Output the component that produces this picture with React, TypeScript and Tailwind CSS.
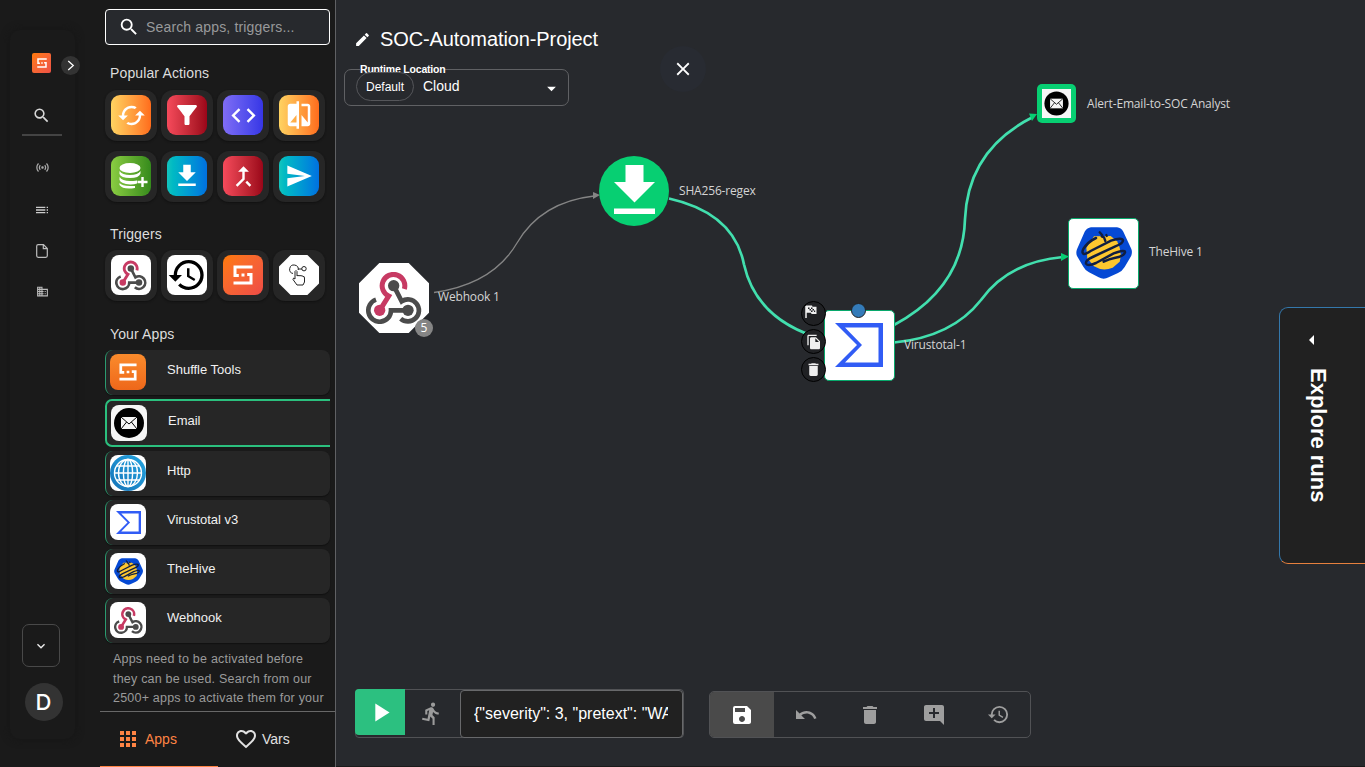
import React from "react";
import {
  MdSearch, MdCached, MdFilterAlt, MdCode, MdCompare, MdGetApp, MdCallMerge, MdSend, MdHistory,
  MdSave, MdUndo, MdDelete, MdAddComment, MdDirectionsRun, MdPlayArrow, MdEdit, MdClose,
  MdArrowDropDown, MdArrowLeft, MdApps, MdFavoriteBorder, MdFileCopy,
  MdToc, MdSensors, MdKeyboardArrowDown, MdBusiness,
} from "react-icons/md";

function WebhookLogo({ className }: { className: string }) {
  return (
    <svg viewBox="78 426 168 156" className={className} fill="none" strokeWidth="14">
      <path d="M193 477A34 34 0 1 0 146 498L121 538" stroke="#c73a63" strokeWidth="15" />
      <circle cx="119" cy="541" r="17" fill="#c73a63" />
      <path d="M161 467L185 514A33 33 0 1 1 182 566" stroke="#4b4b4b" />
      <path d="M108 509A34 34 0 1 0 153 541H204" stroke="#4b4b4b" />
      <circle cx="161" cy="467" r="17" fill="#4b4b4b" />
      <circle cx="204" cy="541" r="17" fill="#4b4b4b" />
    </svg>
  );
}

function ShuffleMark({ className }: { className: string }) {
  return (
    <svg viewBox="0 0 20 20" className={className} fill="none" stroke="#fff" strokeWidth="3">
      <path d="M19.500 2H2V10.500H5.800M.5 18H18V9.500H14.200" />
      <path d="M8.500 10H11.500" />
    </svg>
  );
}

function MailLogo({ className }: { className: string }) {
  return (
    <svg viewBox="0 0 36 36" className={className}>
      <circle cx="18" cy="18" r="15" fill="#000" />
      <path d="M10 12H26V24H10Z" fill="#f5f5f5" />
      <path d="M10 12L18 19L26 12M10 24L15.600 17M26 24L20.400 17" fill="none" stroke="#000" strokeWidth="1" />
    </svg>
  );
}

function HttpLogo() {
  return (
    <svg viewBox="0 0 36 36" className="size-9">
      <defs>
        <linearGradient id="globe" x1="0" y1="1" x2="1" y2="0">
          <stop stopColor="#1673b8" /><stop offset="1" stopColor="#23a5e0" />
        </linearGradient>
      </defs>
      <circle cx="18" cy="18" r="18" fill="url(#globe)" />
      <g fill="none" stroke="#fff" strokeWidth="1.4">
        <circle cx="18" cy="18" r="13.5" />
        <ellipse cx="18" cy="18" rx="9.5" ry="13.5" />
        <ellipse cx="18" cy="18" rx="4.6" ry="13.5" />
        <path d="M18 4.500V31.500M4.500 18H31.500M6.500 11H29.500M6.500 25H29.500" />
      </g>
    </svg>
  );
}

function SigmaLogo({ className }: { className: string }) {
  return (
    <svg viewBox="0 0 48 44" className={className}>
      <path d="M0 0H48V44H0L22 22ZM10 4.500L27 22L10 39.500H43.500V4.500Z" fill="#315cf5" fillRule="evenodd" />
    </svg>
  );
}

function HiveLogo({ className }: { className: string }) {
  return (
    <svg viewBox="0 0 168 156" className={className}>
      <path d="M45 1H123Q135 2 142 14L166 66Q170 76 165 88L146 120Q139 132 126 138L98 151Q83 159 68 151L39 136Q28 130 22 119L3 87Q-1 77 3 67L26 14Q34 2 45 1Z" fill="#0549d4" />
      <path d="M54 28L104 27L123 43Q140 75 131 104L110 122Q80 134 54 118L34 94L31 62Z" fill="#fdc72f" />
      <path d="M60 33Q36 44 22 66Q16 78 24 81Q30 81 44 72L105 41Q139 30 141 40Q141 50 118 58L50 90Q28 100 30 110Q36 119 60 108L113 79Q148 66 147 76Q143 88 118 92Q99 96 83 104" fill="none" stroke="#101e41" strokeWidth="7.500" strokeLinecap="round" />
      <path d="M71 16L79 25M77 28L84 31L88 42M91 24L92 27" stroke="#101e41" strokeWidth="7" strokeLinecap="round" fill="none" />
    </svg>
  );
}

function DatabasePlus() {
  return (
    <svg viewBox="0 0 30 26" className="ml-1.5 h-[26px] w-[30px]" fill="#fff">
      <ellipse cx="11" cy="5" rx="10.5" ry="5" />
      <path d="M.5 8Q3 12 11 12T21.500 8V10.500Q20 15 11 15T.5 11ZM.5 14Q3 18 11 18T18 17V20.500Q15 21.500 11 21.400Q2 21 .5 17ZM.5 20Q3 23 11 23H16V25Q4 27 .5 22Z" />
      <path d="M23.500 14V24M18.500 19H28.500" stroke="#fff" strokeWidth="2.4" />
    </svg>
  );
}

function HandTap() {
  return (
    <svg viewBox="0 0 20 22" className="h-[22px] w-5" fill="none" stroke="#222" strokeWidth="1">
      <path d="M4 9.500A4.300 4.300 0 1 1 9.200 6M9 5H13" />
      <circle cx="15" cy="4.700" r="2.200" />
      <path d="M6 15V7.500Q7 5.500 8 7.500V12Q9 10.500 10 12Q11 10.700 12 12Q13 11 14 12.500Q15.500 12 15.500 14V18L14 21H8L4 15.500Q4 13 6 15" />
    </svg>
  );
}

function FlagIcon() {
  return (
    <svg viewBox="0 0 12 13" className="mr-1.5 mb-1 h-[13px] w-3">
      <path d="M1 13V1" stroke="#f0f0f0" strokeWidth="1.500" />
      <path d="M1 .5H7L7.500 1.800H11.500V9H6.500L6 7.700H1Z" fill="#f0f0f0" />
      <path d="M3 2.500H4.500V4H3ZM6 2.500H7.500V4H6ZM4.500 4H6V5.500H4.500ZM7.500 4H9V5.500H7.500ZM6 5.500H7.500V7H6ZM9 5.500H10.200V7H9Z" fill="#202124" />
    </svg>
  );
}

function DocumentIcon() {
  return (
    <svg viewBox="0 0 12 14" className="mt-[26px] h-3.5 w-3" fill="none" stroke="#bdbdbd" strokeWidth="1.200">
      <path d="M7.500 .7H2.200Q.7 .7 .7 2.200V11.800Q.7 13.300 2.200 13.300H9.800Q11.300 13.300 11.300 11.800V4.500ZM7.300 .8V4.700H11.200" />
    </svg>
  );
}

const tile = "flex h-[51px] w-[52px] items-center justify-center rounded-[12px] bg-[#262626] shadow-[0_1px_2px_#111]";

function Tile({ tone, children }: { tone: string; children: React.ReactNode }) {
  return (
    <div className={tile}>
      <div className={`mb-px flex size-10 items-center justify-center text-white ${tone}`}>{children}</div>
    </div>
  );
}

const yellow = "rounded-[9px] bg-linear-to-r from-[#ffd361] to-[#ff6c1b]";
const red = "rounded-[9px] bg-linear-to-r from-[#f64a5b] to-[#9b0519]";
const blue = "rounded-[9px] bg-linear-to-r from-[#13c5bd] to-[#0070e0]";
const heading = "ml-[5px] h-5 shrink-0 text-[14px] leading-5 tracking-[0.13px] text-[#ddd]";

function AppRow({ name, tone, active, children }: { name: string; tone: string; active?: boolean; children: React.ReactNode }) {
  return (
    <div className={active
      ? "flex h-[48px] w-[225px] shrink-0 items-center rounded-l-[7px] border-2 border-r-0 border-[#2bc07e] bg-[#262626] pl-1"
      : "flex h-[45px] w-[225px] shrink-0 items-center rounded-[8px] border-l border-[#2b9b70] bg-[#262626] pl-1 shadow-[0_1px_1px_#111]"}>
      <div className={`mb-px flex size-9 shrink-0 items-center justify-center overflow-hidden rounded-[8px] ${tone}`}>{children}</div>
      <span className="mb-[5px] ml-[21px] text-[13px] text-[#f1f1f1]">{name}</span>
    </div>
  );
}

function Rail() {
  return (
    <nav className="flex w-[100px] shrink-0 pt-[30px] pl-[10px]">
      <div className="flex h-[709px] w-[65px] flex-col items-center rounded-[10px] shadow-[0_0_8px_#151515]">
        <div className="flex h-[68px] w-full items-start pt-[23px] pl-[22px]">
          <div className="flex h-5 w-[19px] shrink-0 items-center justify-center rounded-[2px] bg-linear-to-br from-[#ff7a00] to-[#ee5145]">
            <ShuffleMark className="size-[10px]" />
          </div>
          <div className="mt-[3px] ml-[10px] flex size-[19px] shrink-0 items-center justify-center rounded-full bg-[#333] text-white">
            <svg viewBox="0 0 8 12" className="ml-px h-[11px] w-2" fill="none" stroke="#fff" strokeWidth="1.400"><path d="M1 1L6.500 6L1 11" /></svg>
          </div>
        </div>
        <MdSearch size={19} className="mt-2 mr-0.5 text-[#d8d8d8]" />
        <div className="mt-[9px] mr-[2px] h-0.5 w-10 bg-[#444]" />
        <div className="mr-[1px] flex flex-col items-center">
          <MdSensors size={15} className="mt-6 text-[#aaa]" />
          <MdToc size={16} className="mt-[27px] text-[#ccc]" />
          <DocumentIcon />
          <MdBusiness size={13} className="mt-[27px] text-[#bbb]" />
        </div>
        <div className="mt-[326px] mr-[3px] flex h-[43px] w-[38px] shrink-0 items-center justify-center rounded-[7px] border border-[#494949] text-[#eee]">
          <MdKeyboardArrowDown size={16} />
        </div>
        <div className="mt-4 ml-[2px] flex size-[38px] shrink-0 items-center justify-center rounded-full bg-[#333] font-['Inter',sans-serif] text-[22px] font-medium text-white">D</div>
      </div>
    </nav>
  );
}

function AppsPanel() {
  return (
    <aside className="flex h-full w-[236px] shrink-0 flex-col border-r border-[#606164]">
      <div className="flex h-[711px] shrink-0 flex-col overflow-hidden pl-[5px]">
        <div className="mt-[9px] flex h-9 w-[225px] shrink-0 items-center rounded-[4px] border border-white bg-[#27292d] pl-3 text-white">
          <MdSearch size={22} />
          <span className="ml-[6px] text-[14px] tracking-[0.16px] text-[#98999b]">Search apps, triggers...</span>
        </div>
        <h2 className={`mt-[18px] ${heading}`}>Popular Actions</h2>
        <div className="mt-[7px] grid shrink-0 grid-cols-[repeat(4,52px)] gap-x-1 gap-y-[10px]">
          <Tile tone={yellow}><MdCached size={29} /></Tile>
          <Tile tone={red}><MdFilterAlt size={30} /></Tile>
          <Tile tone="rounded-[9px] bg-linear-to-r from-[#806cf5] to-[#3735e6]"><MdCode size={29} /></Tile>
          <Tile tone={yellow}><MdCompare size={30} /></Tile>
          <Tile tone="rounded-[9px] bg-linear-to-r from-[#8acd42] to-[#358b1c]"><DatabasePlus /></Tile>
          <Tile tone={blue}><MdGetApp size={30} /></Tile>
          <Tile tone={red}><MdCallMerge size={29} /></Tile>
          <Tile tone={blue}><MdSend size={28} /></Tile>
        </div>
        <h2 className={`mt-[22px] ${heading}`}>Triggers</h2>
        <div className="mt-[6px] flex shrink-0 gap-1">
          <Tile tone="rounded-[8px] bg-white"><WebhookLogo className="h-[31px] w-8" /></Tile>
          <Tile tone="rounded-[8px] bg-white"><MdHistory size={40} className="text-black" /></Tile>
          <Tile tone="rounded-[8px] bg-linear-to-br from-[#ff7a00] to-[#ee4b45]"><ShuffleMark className="size-5" /></Tile>
          <Tile tone="bg-white [clip-path:polygon(29%_0,71%_0,100%_29%,100%_71%,71%_100%,29%_100%,0_71%,0_29%)]"><HandTap /></Tile>
        </div>
        <h2 className={`mt-[23px] ${heading}`}>Your Apps</h2>
        <div className="mt-1.5 flex shrink-0 flex-col gap-1">
          <AppRow name="Shuffle Tools" tone="bg-linear-to-b from-[#fa8b2c] to-[#ee671a]"><ShuffleMark className="size-[18px]" /></AppRow>
          <AppRow name="Email" tone="bg-[#f6f6f6]" active><MailLogo className="size-9" /></AppRow>
          <AppRow name="Http" tone="bg-white"><HttpLogo /></AppRow>
          <AppRow name="Virustotal v3" tone="bg-white"><SigmaLogo className="h-[23px] w-[25px]" /></AppRow>
          <AppRow name="TheHive" tone="bg-white"><HiveLogo className="h-[27px] w-[29px]" /></AppRow>
          <AppRow name="Webhook" tone="bg-white"><WebhookLogo className="h-[27px] w-[29px]" /></AppRow>
        </div>
        <p className="mt-[7px] ml-2 w-[222px] text-[12.5px] leading-[19.5px] tracking-[0.21px] whitespace-nowrap text-[#9a9a9a]">
          Apps need to be activated before<br />they can be used. Search from our<br />2500+ apps to activate them for your
        </p>
      </div>
      <div className="flex h-14 items-start border-t border-[#686868] text-[14px]">
        <div className="flex h-[55px] w-[118px] items-center border-b border-[#ff8444] pl-4 text-[#ff8444]">
          <MdApps size={24} /><span className="ml-[5px]">Apps</span>
        </div>
        <div className="flex h-[54px] flex-1 items-center pl-4 text-[#e1e1e1]">
          <MdFavoriteBorder size={24} /><span className="ml-[4px]">Vars</span>
        </div>
      </div>
    </aside>
  );
}

function Edges() {
  return (
    <svg viewBox="336 0 1029 767" className="absolute inset-0 h-[767px] w-full" fill="none">
      <path d="M434 292.500Q493 284 517 243Q541 202 594 196" stroke="#858585" strokeWidth="1.300" />
      <path d="M593 192L600 195L593 199Z" fill="#858585" />
      <g stroke="#42dfae" strokeWidth="2.700">
        <path d="M669 198.500Q734 213 744 264.500Q757 322 826 340" />
        <path d="M894 325Q963 288 965 219Q968 150 1032 117.500" />
        <path d="M894 342.500Q952 337 981 300Q1008 262 1063 257" />
      </g>
      <path d="M1029 113.500L1037 114L1032 121Z" fill="#07cf72" />
      <path d="M1061 253L1069 256.500L1061 261Z" fill="#07cf72" />
    </svg>
  );
}

const label = "absolute font-['Open_Sans','Noto_Sans',sans-serif] text-[12px] leading-4 tracking-[-0.17px] whitespace-nowrap text-[#d4d4d4]";
const nodeAction = "flex size-[25px] items-center justify-center rounded-full border border-black bg-[#202124] text-[#f0f0f0]";

function Nodes() {
  return (
    <>
      <div className="absolute top-[263px] left-[23px] flex size-[70px] items-center justify-center bg-white [clip-path:polygon(29%_0,71%_0,100%_29%,100%_71%,71%_100%,29%_100%,0_71%,0_29%)]">
        <WebhookLogo className="h-[52px] w-14" />
      </div>
      <div className="absolute top-[319px] left-[79px] flex size-[18px] items-center justify-center rounded-full bg-[#858585] font-['Open_Sans',sans-serif] text-[12px] text-white">5</div>
      <span className={`${label} top-[289px] left-[102px]`}>Webhook 1</span>

      <div className="absolute top-[156px] left-[263px] flex size-[70px] items-center justify-center rounded-full bg-[#07cf72]">
        <svg viewBox="0 0 41 49" className="mb-1 h-[49px] w-[41px]" fill="#fff"><path d="M11.500 0H29.500V17H41L20.500 37.500L0 17H11.500ZM0 43.500H41V49H0Z" /></svg>
      </div>
      <span className={`${label} top-[183px] left-[343px]`}>SHA256-regex</span>

      <div className="absolute top-[310px] left-[488px] flex size-[71px] items-center justify-center rounded-[5px] border border-[#07a86b] bg-white">
        <SigmaLogo className="mr-px mb-px h-11 w-12" />
      </div>
      <div className="absolute top-[303px] left-[515px] size-[15px] rounded-full border border-[#202124] bg-[#347bb9]" />
      <div className="absolute top-[301px] left-[465px] flex flex-col gap-[3px]">
        <div className={nodeAction}><FlagIcon /></div>
        <div className={nodeAction}><MdFileCopy size={16} /></div>
        <div className={nodeAction}><MdDelete size={17} /></div>
      </div>
      <span className={`${label} top-[337px] left-[568px]`}>Virustotal-1</span>

      <div className="absolute top-[84px] left-[701px] flex size-[39px] items-center justify-center rounded-[5px] bg-[#07cf72]">
        <div className="bg-[#f6f6f6]"><MailLogo className="size-[29px]" /></div>
      </div>
      <span className={`${label} top-[96px] left-[751px]`}>Alert-Email-to-SOC Analyst</span>

      <div className="absolute top-[218px] left-[732px] flex size-[71px] items-center justify-center rounded-[5px] border border-[#07a86b] bg-white">
        <HiveLogo className="mb-0.5 h-[52px] w-14" />
      </div>
      <span className={`${label} top-[244px] left-[813px]`}>TheHive 1</span>
    </>
  );
}

function Canvas() {
  return (
    <main className="relative flex min-w-0 flex-1 flex-col border-b border-[#1a1a1a] bg-[#27292d]">
      <Edges />
      <Nodes />
      <header className="relative flex h-[130px]">
        <div className="w-[312px] pt-[26px] pl-2">
          <div className="flex h-[26px] items-center pl-2.5 text-white">
            <MdEdit size={17} />
            <h1 className="mb-px ml-[9px] text-[20px] tracking-[-0.1px] whitespace-nowrap">SOC-Automation-Project</h1>
          </div>
          <fieldset className="mt-[12px] h-[42px] w-[225px] rounded-[7px] border border-[#606164] text-white">
            <legend className="ml-[15px] h-[11px] text-[10.5px] leading-[11px] font-bold tracking-[-0.2px]">Runtime Location</legend>
            <div className="-mt-[4px] flex h-[31px] items-center pl-[11px]">
              <span className="flex h-[29px] w-[58px] items-center justify-center rounded-full border border-[#55565a] text-[12px]">Default</span>
              <span className="ml-[9px] text-[14px]">Cloud</span>
              <MdArrowDropDown size={21} className="mt-1 mr-[6px] ml-auto" />
            </div>
          </fieldset>
        </div>
        <button className="mt-[46px] ml-[12px] flex size-[46px] items-center justify-center rounded-full bg-[#282b32] text-white"><MdClose size={22} /></button>
      </header>
      <div className="relative mt-auto mb-[28px] flex items-start pl-[19px]">
        <div className="flex h-[49px] w-[329px] rounded-[4px] border border-[#515255]">
          <button className="-mt-px -ml-px flex h-[46px] w-[50px] shrink-0 items-center justify-center rounded-l-[4px] bg-[#2cc080] text-white"><MdPlayArrow size={31} /></button>
          <button className="flex w-[55px] shrink-0 items-center justify-center pr-0.5 text-[#9b9b9b]"><MdDirectionsRun size={25} /></button>
          <div className="flex h-[48px] w-[223px] items-center rounded-[4px] border border-[#68696b] bg-[#212121] pr-[14px] pl-[13px] text-[16px] text-white">
            <span className="overflow-hidden whitespace-nowrap">{'{"severity": 3, "pretext": "WARNING'}</span>
          </div>
        </div>
        <div className="mt-[2px] ml-[25px] flex h-[47px] w-[322px] overflow-hidden rounded-[5px] border border-[#515255] text-[#9e9e9e]">
          <button className="flex flex-1 items-center justify-center bg-[#4a4a4a] text-white"><MdSave size={24} /></button>
          <button className="flex flex-1 items-center justify-center"><MdUndo size={24} /></button>
          <button className="flex flex-1 items-center justify-center"><MdDelete size={24} /></button>
          <button className="flex flex-1 items-center justify-center"><MdAddComment size={24} /></button>
          <button className="flex flex-1 items-center justify-center"><MdHistory size={23} /></button>
        </div>
      </div>
      <div className="absolute top-[307px] right-0 flex h-[257px] w-[86px] flex-col items-center rounded-l-[9px] border border-r-0 border-[#e6803e] border-t-[#3478ac] border-l-[#3478ac] bg-[#212121] pt-5 pr-[9px] text-white">
        <MdArrowLeft size={24} className="mr-3" />
        <span className="mt-[16px] text-[22px] leading-6 font-bold [writing-mode:vertical-rl]">Explore runs</span>
      </div>
    </main>
  );
}

export default function App() {
  return (
    <div className="flex h-[767px] w-[1365px] overflow-hidden bg-[#1a1a1a] font-['Liberation_Sans',Arial,sans-serif]">
      <Rail />
      <AppsPanel />
      <Canvas />
    </div>
  );
}
